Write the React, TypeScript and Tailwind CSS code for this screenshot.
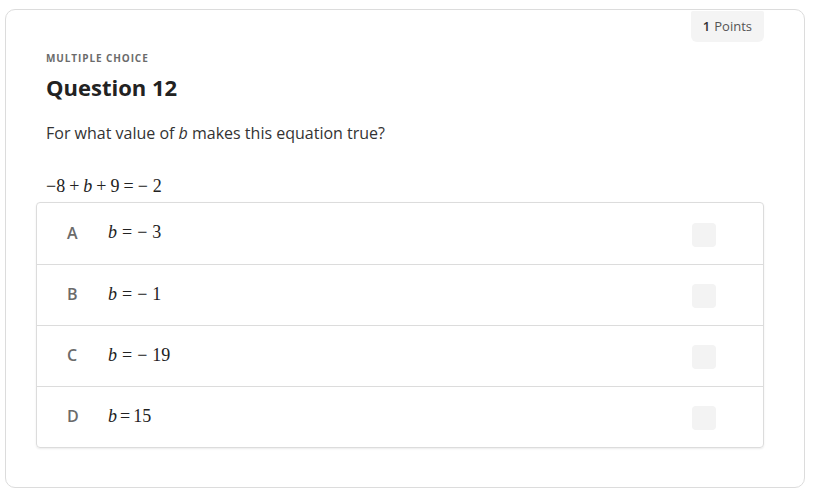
import React from "react";

const serif = "font-['Liberation_Serif','Times_New_Roman',serif]";
const sans = "font-['Open_Sans','Noto_Sans',sans-serif]";

function B() {
  return <i className="italic">b</i>;
}

const options = [
  { letter: "A", expr: (<><B /><span className="mx-[5px]">=</span>−<span className="ml-[5px]">3</span></>) },
  { letter: "B", expr: (<><B /><span className="mx-[5px]">=</span>−<span className="ml-[5px]">1</span></>) },
  { letter: "C", expr: (<><B /><span className="mx-[5px]">=</span>−<span className="ml-[5px]">19</span></>) },
  { letter: "D", expr: (<><B /><span className="mx-[3px]">=</span>15</>) },
];

export default function App() {
  return (
    <div className={`w-[816px] h-[495px] bg-white ${sans}`}>
      <div className="ml-[5px] pt-[9px]">
        <div className="w-[800px] h-[479px] rounded-[10px] border border-[#dcdcdc] bg-white">
          {/* points badge */}
          <div className="flex justify-end pr-[40px]">
            <div className="mt-[1px] h-[31px] pl-[12px] pr-[12px] flex items-center gap-[4px] rounded-b-[6px] rounded-t-[2px] bg-[#f4f4f4] text-[13px] text-[#555]">
              <span className="font-semibold text-[#333]">1</span>
              <span>Points</span>
            </div>
          </div>

          <div className="px-[40px]">
            <div className="mt-[9px] text-[10px] leading-[14px] font-bold tracking-[0.09em] text-[#6b6b6b]">
              MULTIPLE CHOICE
            </div>
            <h1 className="mt-[7px] text-[22px] leading-[30px] font-bold text-[#222]">Question 12</h1>
            <p className="mt-[19px] text-[16px] leading-[24px] text-[#333]">
              For what value of <i className="italic">b</i> makes this equation true?
            </p>
            <p className={`mt-[29px] text-[18px] leading-[24px] text-[#222] ${serif}`}>
              −8<span className="mx-[4px]">+</span><B /><span className="mx-[4px]">+</span>9<span className="mx-[4px]">=</span>−<span className="ml-[5px]">2</span>
            </p>
          </div>

          {/* answer choices */}
          <div className="mt-[4px] ml-[30px] mr-[40px] rounded-[4px] border border-[#dcdcdc] shadow-[0_1px_2px_rgba(0,0,0,0.08)]">
            {options.map((o, i) => (
              <div
                key={o.letter}
                className={`h-[61px] flex items-center pl-[30px] pr-[47px] ${i > 0 ? "border-t border-[#dcdcdc]" : ""}`}
              >
                <span className="mb-[2px] w-[41px] text-[16px] font-semibold text-[#6b6b6b]">{o.letter}</span>
                <span className={`mb-[2px] flex-1 text-[18px] text-[#222] ${serif}`}>{o.expr}</span>
                <span className="mt-[2px] w-[24px] h-[24px] rounded-[4px] bg-[#f3f3f3]" />
              </div>
            ))}
          </div>
        </div>
      </div>
    </div>
  );
}
